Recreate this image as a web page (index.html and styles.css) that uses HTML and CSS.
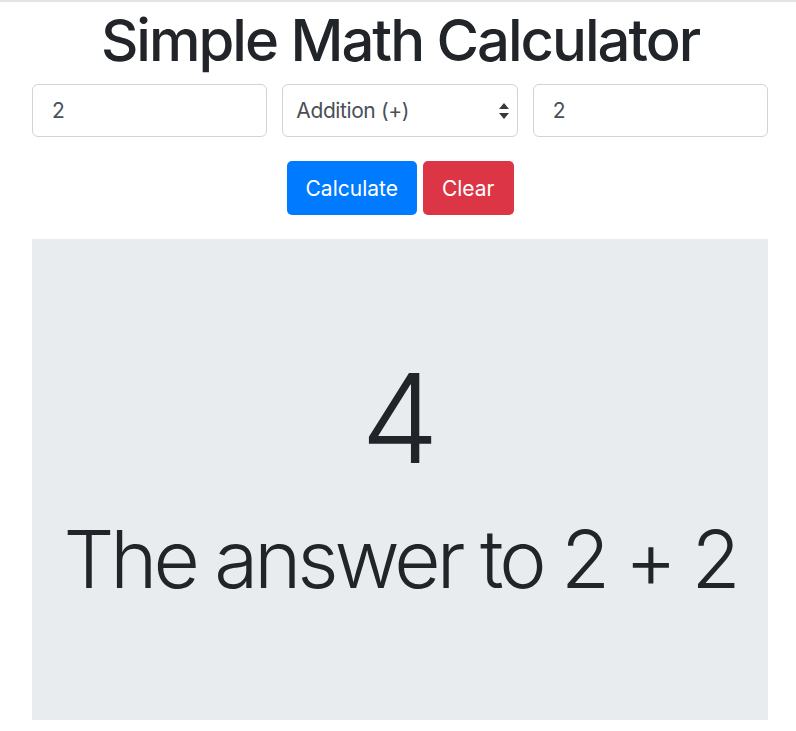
FILE: index.html
```html
<!DOCTYPE html>
<html>
<head>
<meta charset="utf-8">
<link rel="stylesheet" href="styles.css">
</head>
<body>
<div class="topline"></div>
<div class="container">
  <h1 class="title">Simple Math Calculator</h1>
  <div class="inputs">
    <div class="field">2</div>
    <div class="field select">
      <span>Addition (+)</span>
      <svg class="arrows" width="10" height="16" viewBox="0 0 10 16"><path d="M5 0 L10 6 L0 6 Z M0 10 L10 10 L5 16 Z" fill="#343a40"/></svg>
    </div>
    <div class="field">2</div>
  </div>
  <div class="buttons">
    <button class="btn btn-blue">Calculate</button>
    <button class="btn btn-red">Clear</button>
  </div>
  <div class="jumbo">
    <div class="result">4</div>
    <div class="answer">The answer to 2 + 2</div>
  </div>
</div>
</body>
</html>
```
FILE: styles.css
```css
html, body {
  margin: 0;
  padding: 0;
  background: #fff;
  font-family: "Inter", "Liberation Sans", sans-serif;
  color: #212529;
}
.topline {
  height: 2px;
  background: #e4e4e4;
}
.container {
  width: 736px;
  padding-left: 32px;
}
.title {
  margin: 0;
  padding-top: 3px;
  text-align: center;
  font-size: 58px;
  font-weight: 500;
  letter-spacing: -2px;
  line-height: 70px;
  white-space: nowrap;
}
.inputs {
  margin-top: 9px;
  display: grid;
  grid-template-columns: 1fr 1fr 1fr;
  gap: 15px;
}
.field {
  height: 53px;
  box-sizing: border-box;
  border: 1px solid #ced4da;
  border-radius: 6px;
  padding: 0 19px;
  display: flex;
  align-items: center;
  font-size: 21px;
  color: #495057;
}
.select {
  justify-content: space-between;
  padding-right: 8px;
  padding-left: 13px;
  letter-spacing: -0.4px;
}
.buttons {
  margin-top: 24px;
  display: flex;
  justify-content: center;
  gap: 6px;
}
.btn {
  height: 54px;
  border: none;
  border-radius: 5px;
  padding: 0 19px;
  font-family: inherit;
  font-size: 21px;
  color: #fff;
}
.btn-blue { background: #007bff; }
.btn-red { background: #dc3545; }
.jumbo {
  margin-top: 24px;
  height: 481px;
  background: #e9ecef;
  display: flex;
  flex-direction: column;
  align-items: center;
  padding-top: 104px;
  box-sizing: border-box;
}
.result {
  font-size: 124px;
  font-weight: 300;
  line-height: 150px;
}
.answer {
  margin-top: 18px;
  font-size: 80px;
  font-weight: 300;
  letter-spacing: -4px;
  line-height: 96px;
  white-space: nowrap;
}
```
